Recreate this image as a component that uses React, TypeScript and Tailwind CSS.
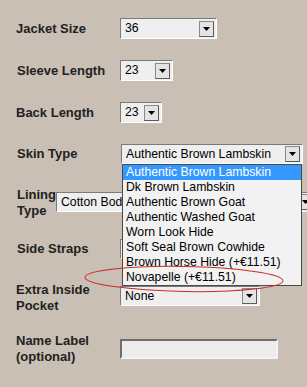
import React from "react";

function Arrow() {
  return (
    <div className="flex h-[16px] w-[15px] shrink-0 items-center justify-center border border-t-[#8a8a8a] border-l-[#8a8a8a] border-b-[#5a5a5a] border-r-[#5a5a5a] bg-[#e4e4e4]">
      <svg width="7" height="4" viewBox="0 0 7 4">
        <polygon points="0,0 7,0 3.5,4" fill="#000" />
      </svg>
    </div>
  );
}

function Select({ value, w, h = 21 }: { value: string; w: number; h?: number }) {
  return (
    <div
      className="flex shrink-0 items-center justify-between border border-t-[#7a7a7a] border-l-[#7a7a7a] border-b-white border-r-white bg-[#efefef] pl-[4px] pr-[2px]"
      style={{ width: w, height: h }}
    >
      <span className="truncate text-[12.25px] leading-none text-black">{value}</span>
      <Arrow />
    </div>
  );
}

const label = "text-[13px] font-bold leading-[16px] text-[#222]";

export default function App() {
  const items = [
    "Authentic Brown Lambskin",
    "Dk Brown Lambskin",
    "Authentic Brown Goat",
    "Authentic Washed Goat",
    "Worn Look Hide",
    "Soft Seal Brown Cowhide",
    "Brown Horse Hide (+€11.51)",
    "Novapelle (+€11.51)",
  ];
  return (
    <div className="relative flex h-[387px] w-[307px] flex-col overflow-hidden bg-[#c9bfb4] font-['Liberation_Sans',Arial,sans-serif]">
      <div className="mt-[18px] flex h-[21px] items-center">
        <div className={`w-[120px] pl-[16px] ${label}`}>Jacket Size</div>
        <Select value="36" w={97} />
      </div>
      <div className="mt-[21px] flex h-[21px] items-center">
        <div className={`w-[120px] pl-[17px] ${label}`}>Sleeve Length</div>
        <Select value="23" w={53} />
      </div>
      <div className="mt-[21px] flex h-[21px] items-center">
        <div className={`w-[120px] pl-[16px] ${label}`}>Back Length</div>
        <Select value="23" w={42} />
      </div>
      <div className="mt-[21px] flex h-[20px] items-center">
        <div className={`w-[121px] pl-[17px] ${label}`}>Skin Type</div>
        <Select value="Authentic Brown Lambskin" w={182} h={20} />
      </div>
      <div className="mt-[23px] flex items-start">
        <div className={`w-[60px] pl-[17px] ${label}`}>
          Lining
          <br />
          Type
        </div>
        <div className="mt-[5px]">
          <Select value="Cotton Bod" w={260} h={20} />
        </div>
      </div>
      <div className="mt-[20px] flex h-[20px] items-center">
        <div className={`w-[120px] pl-[17px] ${label}`}>Side Straps</div>
        <Select value="" w={100} h={20} />
      </div>
      <div className="mt-[23px] flex items-start">
        <div className={`w-[120px] pl-[16px] ${label}`}>
          Extra Inside
          <br />
          Pocket
        </div>
        <div className="mt-[4px]">
          <Select value="None" w={140} h={20} />
        </div>
      </div>
      <div className="mt-[19px] flex items-start">
        <div className={`w-[120px] pl-[16px] ${label}`}>
          Name Label
          <br />
          (optional)
        </div>
        <div className="mt-[6px] h-[20px] w-[158px] border-2 border-t-[#6e6e6e] border-l-[#6e6e6e] border-b-[#f4f4f4] border-r-[#f4f4f4] bg-[#ececec]" />
      </div>

      <div className="absolute left-[122px] top-[164px] w-[180px] border border-[#4a4a4a] bg-[#f2f2f2]">
        {items.map((t, i) => (
          <div
            key={t}
            className={`h-[15px] pl-[3px] text-[12.25px] leading-[15px] ${
              i === 0 ? "bg-[#3399ff] text-white" : "text-black"
            }`}
          >
            {t}
          </div>
        ))}
      </div>

      <svg
        className="pointer-events-none absolute left-0 top-0"
        width="307"
        height="387"
        viewBox="0 0 307 387"
      >
        <ellipse
          cx="184"
          cy="279"
          rx="99"
          ry="12.5"
          transform="rotate(1 184 279)"
          fill="none"
          stroke="#cc2a2a"
          strokeWidth="1"
        />
      </svg>
    </div>
  );
}
